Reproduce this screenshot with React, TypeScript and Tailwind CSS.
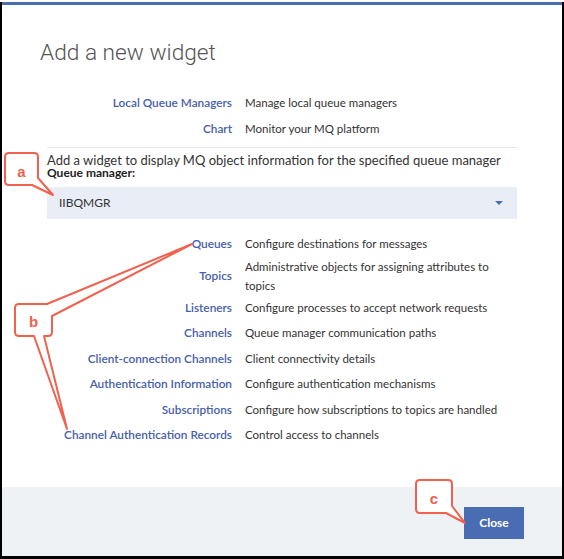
import React from "react";

const topRows = [
  { label: "Local Queue Managers", desc: "Manage local queue managers" },
  { label: "Chart", desc: "Monitor your MQ platform" },
];

const rows = [
  { label: "Queues", desc: "Configure destinations for messages" },
  { label: "Topics", desc: "Administrative objects for assigning attributes to topics" },
  { label: "Listeners", desc: "Configure processes to accept network requests" },
  { label: "Channels", desc: "Queue manager communication paths" },
  { label: "Client-connection Channels", desc: "Client connectivity details" },
  { label: "Authentication Information", desc: "Configure authentication mechanisms" },
  { label: "Subscriptions", desc: "Configure how subscriptions to topics are handled" },
  { label: "Channel Authentication Records", desc: "Control access to channels" },
];

const labelCls = "text-right text-[11.8px] leading-[19px] font-semibold text-[#4660ab]";
const descCls = "text-[11.5px] leading-[19px] text-[#333333]";

function Row({ label, desc }: { label: string; desc: string }) {
  return (
    <div className="grid grid-cols-[185px_272px] gap-x-[13px] min-h-[25.5px] items-center">
      <div className={labelCls}>{label}</div>
      <div className={descCls}>{desc}</div>
    </div>
  );
}

export default function App() {
  return (
    <div
      className="relative w-[564px] h-[559px] bg-white pt-[2px]"
      style={{ fontFamily: "Lato, 'Liberation Sans', sans-serif" }}
    >
      <div className="h-[557px] border-x-2 border-b-[3px] border-black flex flex-col">
        <div className="h-[3px] bg-[#4a6cb3]" />
        <div className="flex-1 bg-white pl-[38px]">
          <div
            className="mt-[34px] h-[28px] text-[22.7px] leading-[28px] font-light text-[#555555]"
            style={{ fontFamily: "Roboto, 'Liberation Sans', sans-serif" }}
          >
            Add a new widget
          </div>
          <div className="ml-[7px] w-[470px] mt-[22px]">
            {topRows.map((r) => (
              <div key={r.label} className="grid grid-cols-[185px_272px] gap-x-[13px] h-[26px] items-center">
                <div className={labelCls}>{r.label}</div>
                <div className={descCls}>{r.desc}</div>
              </div>
            ))}
            <div className="mt-[6px] h-px bg-[#e0e5eb]" />
            <div className="mt-[5px] text-[13px] leading-[14px] text-[#333333] whitespace-nowrap">
              Add a widget to display MQ object information for the specified queue manager
            </div>
            <div className="text-[12px] leading-[12px] font-bold text-[#222222]">Queue manager:</div>
            <div className="mt-[8px] h-[32px] bg-[#e9eef6] flex items-center justify-between pl-[12px] pr-[14px]">
              <span className="text-[12px] text-[#333333]">IIBQMGR</span>
              <svg width="8" height="4" viewBox="0 0 8 4">
                <path d="M0 0H8L4 4Z" fill="#4a6cb3" />
              </svg>
            </div>
            <div className="mt-[12px]">
              {rows.map((r) => (
                <Row key={r.label} label={r.label} desc={r.desc} />
              ))}
            </div>
          </div>
        </div>
        <div className="h-[69px] bg-[#eef2f5] flex justify-end items-start pt-[20px] pr-[38px]">
          <button className="w-[60px] h-[32px] bg-[#4a6cb3] text-white text-[12px] font-bold">
            Close
          </button>
        </div>
      </div>

      <svg
        className="absolute left-0 top-0 pointer-events-none"
        width="564"
        height="559"
        viewBox="0 0 564 559"
      >
        <g fill="#ffffff" stroke="#f0614e" strokeWidth="2" strokeLinejoin="round">
          <path d="M9 153H34Q38 153 38 157V178L53 195L32 185H9Q5 185 5 181V157Q5 153 9 153Z" />
          <path d="M19 304H47L192 244L52 316V332Q52 336 48 336H44L67 429L34 336H19Q15 336 15 332V308Q15 304 19 304Z" />
          <path d="M420 480H448Q452 480 452 484V506L465 523L446 513H420Q416 513 416 509V484Q416 480 420 480Z" />
        </g>
        <g
          fill="#f0614e"
          fontSize="15"
          fontWeight="600"
          textAnchor="middle"
          style={{ fontFamily: "'Liberation Sans', Arial, sans-serif" }}
        >
          <text x="21.5" y="177">a</text>
          <text x="33.5" y="327">b</text>
          <text x="434" y="504">c</text>
        </g>
      </svg>
    </div>
  );
}
